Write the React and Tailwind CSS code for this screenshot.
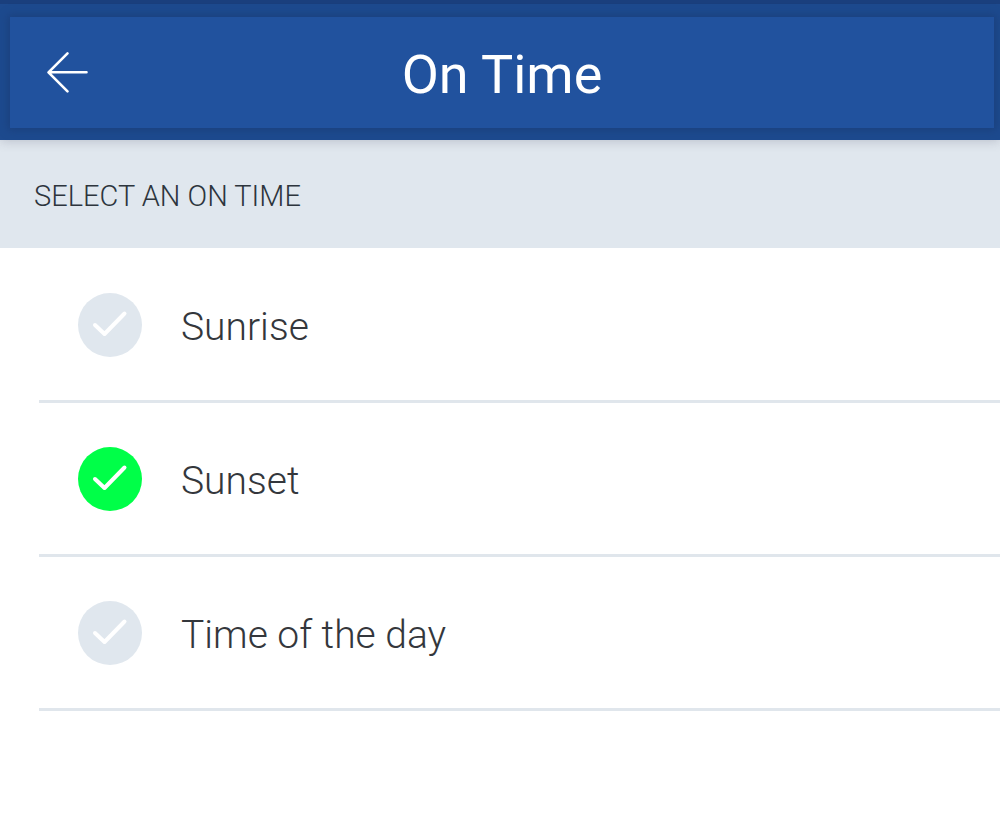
import { useState } from "react";

const OPTIONS = [
    { value: "sunrise", label: "Sunrise" },
    { value: "sunset", label: "Sunset" },
    { value: "time", label: "Time of the day" },
];

function Header({ title }) {
    return (
        <header className="relative border-t-4 border-[#1a3f7d] bg-[#1d4a8e] pt-[13px] pr-[6px] pb-3 pl-[10px] shadow-[0_2px_10px_rgba(60,60,90,0.2)]">
            <div className="grid h-[111px] grid-cols-[96px_1fr_96px] items-center bg-[#21529e] shadow-[0_0_8px_2px_#1b407d]">
                <button type="button" aria-label="Back" className="ml-9 w-11 text-white">
                    <svg
                        viewBox="0 0 44 44"
                        className="h-11 w-11"
                        fill="none"
                        stroke="currentColor"
                        strokeWidth="2.6"
                        strokeLinecap="round"
                        strokeLinejoin="round"
                    >
                        <path d="M40.5 21.3H3M21.5 2.3L2.5 21.3L21.5 40.3" />
                    </svg>
                </button>
                <h1 className="pt-1 text-center text-[54px] leading-[64px] text-white">{title}</h1>
            </div>
        </header>
    );
}

function OptionRow({ option, checked, onChange }) {
    return (
        <li className="border-b-[3px] border-[#e0e6ec]">
            <label className="flex h-[151px] cursor-pointer items-center gap-[39px] pl-[39px]">
                <span className="grid h-16 w-16 shrink-0 place-items-center">
                    <input
                        type="radio"
                        name="on-time"
                        value={option.value}
                        checked={checked}
                        onChange={() => onChange(option.value)}
                        className="col-start-1 row-start-1 h-16 w-16 appearance-none rounded-full bg-[#e0e7ee] checked:bg-[#00ff48]"
                    />
                    <svg
                        viewBox="0 0 64 64"
                        className="pointer-events-none z-10 col-start-1 row-start-1 h-16 w-16"
                        fill="none"
                        stroke="white"
                        strokeWidth="4"
                        strokeLinecap="round"
                        strokeLinejoin="round"
                    >
                        <path d="M17 32L26.5 41L46.5 20.5" />
                    </svg>
                </span>
                <span className="pt-[5px] text-[39px] leading-[48px] font-light text-[#34373c]">{option.label}</span>
            </label>
        </li>
    );
}

export default function App() {
    const [selected, setSelected] = useState("sunset");

    return (
        <div className="min-h-screen bg-white font-[Roboto,sans-serif]">
            <Header title="On Time" />

            <main>
                <h2 className="flex h-[108px] items-center bg-[#e0e7ee] px-[34px] pt-1 text-[29px] leading-9 font-light text-[#2d353d] uppercase">
                    Select an on time
                </h2>

                <ul className="pt-px pl-[39px]">
                    {OPTIONS.map((option) => (
                        <OptionRow
                            key={option.value}
                            option={option}
                            checked={selected === option.value}
                            onChange={setSelected}
                        />
                    ))}
                </ul>
            </main>
        </div>
    );
}
